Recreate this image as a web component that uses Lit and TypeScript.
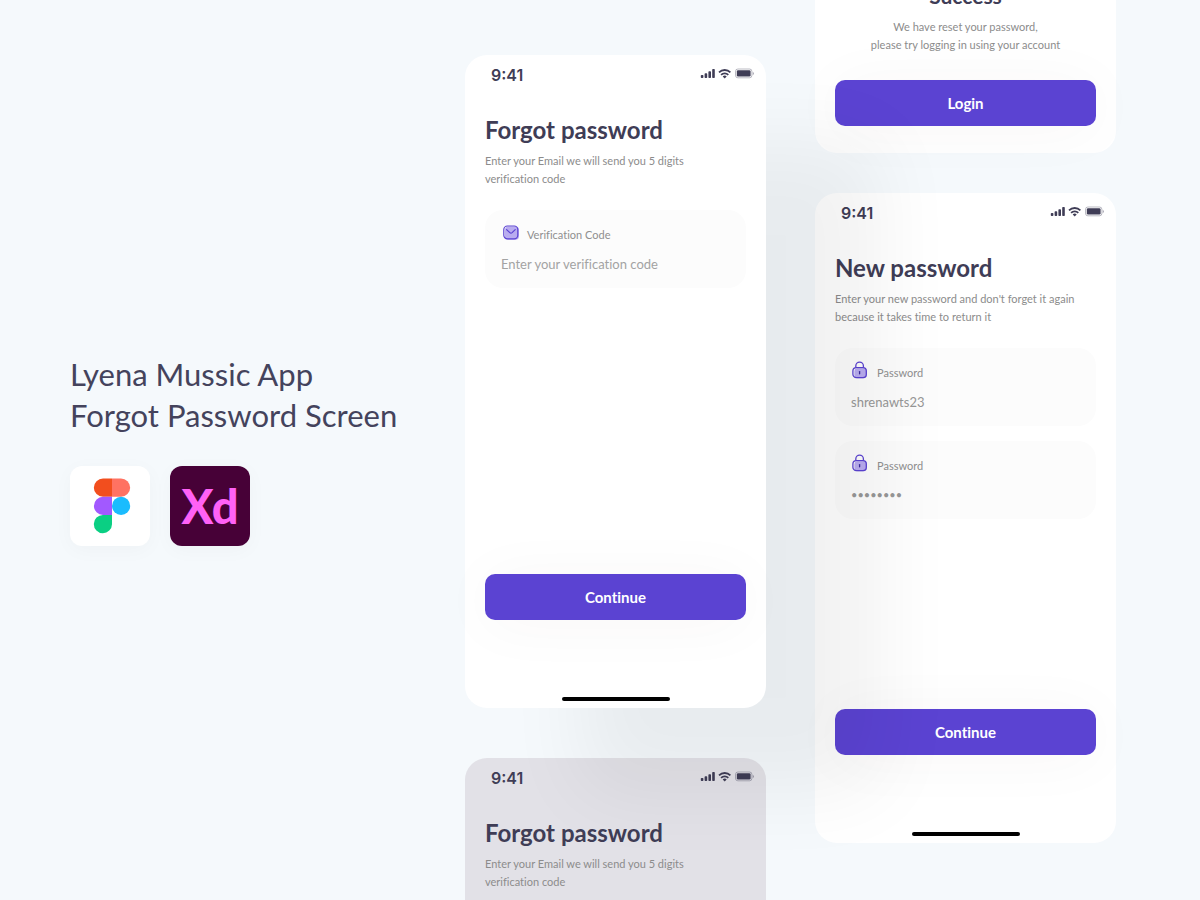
import { LitElement, html, css, svg, nothing } from "lit";
import { customElement, property } from "lit/decorators.js";

const mailIcon = svg`
  <svg class="icon" viewBox="0 0 18 18" width="18" height="18" aria-hidden="true">
    <rect x="4" y="3.6" width="14" height="13.2" rx="3.6" fill="#b9acf0"/>
    <rect x="2.8" y="3" width="14" height="12.8" rx="3.6" fill="none" stroke="#5b43d2" stroke-width="1.2"/>
    <path d="M5.6 6.6 8.8 9.6a1.7 1.7 0 0 0 2.3 0L14.2 6.6" fill="none" stroke="#5b43d2" stroke-width="1.2" stroke-linecap="round"/>
  </svg>`;

const lockIcon = svg`
  <svg class="icon" viewBox="0 0 18 18" width="18" height="18" aria-hidden="true">
    <rect x="3.4" y="7.2" width="12.6" height="10" rx="3.4" fill="#b9acf0"/>
    <rect x="1.9" y="6.6" width="13.4" height="10" rx="3.4" fill="none" stroke="#5b43d2" stroke-width="1.3"/>
    <path d="M4.8 6.6V4.9a3.8 3.8 0 0 1 7.6 0v1.7" fill="none" stroke="#5b43d2" stroke-width="1.3"/>
    <path d="M8.6 10.6v2.2" fill="none" stroke="#3b2a9c" stroke-width="1.3" stroke-linecap="round"/>
  </svg>`;

@customElement("status-bar")
class StatusBar extends LitElement {
  static styles = css`
    :host {
      display: flex;
      justify-content: space-between;
      align-items: center;
      height: 40px;
      padding: 0 12px 0 26px;
      color: #3f3d56;
    }
    time {
      font: 600 16px/20px Inter, sans-serif;
    }
    svg {
      display: block;
      margin-bottom: 3px;
    }
  `;
  render() {
    return html`
      <time>9:41</time>
      <svg width="54" height="11" viewBox="0 0 54 11" fill="currentColor" aria-hidden="true">
        <rect x="0.8" y="7" width="2.6" height="3" rx="0.8"/>
        <rect x="4.6" y="5.3" width="2.6" height="4.7" rx="0.8"/>
        <rect x="8.4" y="3.2" width="2.6" height="6.8" rx="0.8"/>
        <rect x="12.2" y="1" width="2.6" height="9" rx="0.8"/>
        <g fill="none" stroke="currentColor" stroke-width="1.8">
          <path d="M19 4.3a8.2 8.2 0 0 1 11.4 0"/>
          <path d="M21.1 6.9a5.1 5.1 0 0 1 7.2 0"/>
        </g>
        <path d="M22.7 8.4a2.9 2.9 0 0 1 4 0L24.7 10.4z"/>
        <rect x="35.5" y="1" width="16.4" height="8.8" rx="2.4" fill="none" stroke="currentColor" stroke-opacity="0.4" stroke-width="0.9"/>
        <rect x="36.8" y="2.2" width="13.8" height="6.4" rx="1.3"/>
        <path d="M52.8 3.9v3c.7-.3 1-.8 1-1.5s-.3-1.2-1-1.5z" opacity="0.5"/>
      </svg>
    `;
  }
}

@customElement("form-field")
class FormField extends LitElement {
  @property() label = "";
  @property() type = "text";
  @property() value = "";
  @property() placeholder = "";
  @property() icon: "mail" | "lock" = "lock";

  static styles = css`
    :host {
      display: block;
      box-sizing: border-box;
      padding: 14px 16px;
      border-radius: 18px;
      background: #fcfcfc;
      font-family: Lato, sans-serif;
      font-variant-ligatures: none;
    }
    label {
      display: flex;
      align-items: center;
      gap: 8px;
      height: 20px;
      color: #8f8f8f;
      font-size: 11px;
      line-height: 16px;
    }
    .icon {
      display: block;
      margin-bottom: 4px;
    }
    .caption {
      padding-top: 2px;
    }
    input {
      display: block;
      box-sizing: border-box;
      width: 100%;
      height: 20px;
      margin: 10px 0 0;
      padding: 0;
      border: 0;
      outline: 0;
      background: transparent;
      color: #979797;
      font: 400 13px/20px Lato, sans-serif;
      font-variant-ligatures: none;
    }
    input[type="password"] {
      font-size: 11px;
    }
    input::placeholder {
      color: #a3a3a3;
      opacity: 1;
    }
  `;
  render() {
    return html`
      <label for="control">
        ${this.icon === "mail" ? mailIcon : lockIcon}
        <span class="caption">${this.label}</span>
      </label>
      <input id="control" type=${this.type} .value=${this.value} placeholder=${this.placeholder || nothing} />
    `;
  }
}

@customElement("app-root")
class AppRoot extends LitElement {
  static styles = css`
    :host {
      display: block;
      font-family: Lato, sans-serif;
      font-variant-ligatures: none;
      color: #3f3d56;
    }
    .page {
      display: grid;
      grid-template-columns: 1fr 301px 301px;
      column-gap: 49px;
      box-sizing: border-box;
      height: 100vh;
      padding: 0 84px 0 70px;
      overflow: hidden;
      background: #f5f9fc;
    }
    .intro {
      align-self: center;
      white-space: nowrap;
    }
    h1 {
      margin: 0 0 30px;
      font-size: 31px;
      line-height: 41px;
      font-weight: 400;
      color: #44435c;
    }
    .tools {
      display: flex;
      gap: 20px;
    }
    .tool {
      display: flex;
      align-items: center;
      justify-content: center;
      box-sizing: border-box;
      width: 80px;
      height: 80px;
      border-radius: 12px;
      box-shadow: 0 4px 20px rgba(0, 0, 0, 0.03);
    }
    .figma {
      padding-left: 4px;
      background: #fff;
    }
    .xd {
      background: #470137;
      color: #ff61f6;
      font-size: 47px;
      line-height: 80px;
      font-weight: 900;
    }
    .column {
      display: flex;
      flex-direction: column;
      box-sizing: border-box;
      height: 100vh;
    }
    .first {
      z-index: 1;
      padding-top: 55px;
      gap: 50px;
    }
    .second {
      justify-content: flex-end;
      padding-bottom: 57px;
      gap: 40px;
    }
    .phone {
      display: flex;
      flex-direction: column;
      flex: none;
      box-sizing: border-box;
      height: 650px;
      border-radius: 22px;
      background: #fff;
    }
    .lead {
      z-index: 1;
      height: 653px;
      box-shadow: 115px 85px 80px rgba(0, 0, 0, 0.055);
    }
    .dimmed {
      background: #e2e1e7;
    }
    .body {
      display: flex;
      flex-direction: column;
      flex: 1;
      padding: 20px 20px 0;
    }
    h2 {
      margin: 0;
      font-size: 24px;
      line-height: 30px;
      font-weight: 700;
    }
    p {
      margin: 7px 0 22px;
      font-size: 11px;
      line-height: 18px;
      color: #8c8c8c;
    }
    .fields {
      display: grid;
      gap: 15px;
    }
    button {
      width: 100%;
      height: 46px;
      margin: auto 0 77px;
      padding: 0;
      border: 0;
      border-radius: 10px;
      background: #5b43d2;
      color: #fff;
      font: 700 15px/20px Lato, sans-serif;
      font-variant-ligatures: none;
      box-shadow: 0 4px 60px rgba(70, 20, 30, 0.04);
    }
    .home {
      align-self: center;
      width: 108px;
      height: 4px;
      margin-bottom: 7px;
      border-radius: 2px;
      background: #000;
    }
    .result {
      flex: none;
      padding: 60px 20px 27px;
      border-radius: 0 0 22px 22px;
      background: #fff;
      text-align: center;
    }
    .result h2 {
      font-size: 21px;
    }
    .result p {
      margin-bottom: 26px;
    }
    .result button {
      display: block;
      margin: 0;
    }
  `;

  private heading(title: string, first: string, second: string) {
    return html`<h2>${title}</h2><p>${first}<br />${second}</p>`;
  }

  render() {
    return html`
      <main class="page">
        <section class="intro">
          <h1>Lyena Mussic App<br />Forgot Password Screen</h1>
          <div class="tools">
            <div class="tool figma">
              <svg width="38" height="56" viewBox="0 0 38 56" role="img" aria-label="Figma">
                <path d="M19 .5h-9a9.1 9.1 0 0 0 0 18.3h9z" fill="#f24e1e"/>
                <path d="M19 .5h9a9.1 9.1 0 0 1 0 18.3h-9z" fill="#ff7262"/>
                <path d="M19 18.8h-9a9.1 9.1 0 0 0 0 18.2h9z" fill="#a259ff"/>
                <circle cx="28.1" cy="27.9" r="9.1" fill="#1abcfe"/>
                <path d="M10 37h9v9.2A9.1 9.1 0 1 1 10 37z" fill="#0acf83"/>
              </svg>
            </div>
            <div class="tool xd">Xd</div>
          </div>
        </section>

        <div class="column first">
          <section class="phone lead">
            <status-bar></status-bar>
            <div class="body">
              ${this.heading("Forgot password", "Enter your Email we will send you 5 digits", "verification code")}
              <form-field icon="mail" label="Verification Code" placeholder="Enter your verification code"></form-field>
              <button type="button">Continue</button>
            </div>
            <div class="home"></div>
          </section>
          <section class="phone dimmed">
            <status-bar></status-bar>
            <div class="body">
              ${this.heading("Forgot password", "Enter your Email we will send you 5 digits", "verification code")}
            </div>
          </section>
        </div>

        <div class="column second">
          <section class="result">
            ${this.heading("Success", "We have reset your password,", "please try logging in using your account")}
            <button type="button">Login</button>
          </section>
          <section class="phone">
            <status-bar></status-bar>
            <div class="body">
              ${this.heading("New password", "Enter your new password and don't forget it again", "because it takes time to return it")}
              <div class="fields">
                <form-field label="Password" value="shrenawts23"></form-field>
                <form-field label="Password" type="password" value="password"></form-field>
              </div>
              <button type="button">Continue</button>
            </div>
            <div class="home"></div>
          </section>
        </div>
      </main>
    `;
  }
}
